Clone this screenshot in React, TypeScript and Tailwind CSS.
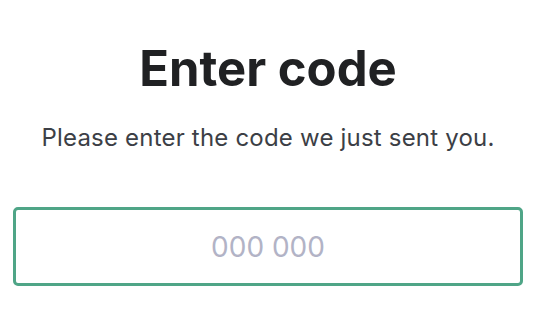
export default function App() {
  return (
    <div className="min-h-screen bg-white font-['Inter',sans-serif]">
      <div className="w-[510px] ml-[13px] pt-[40px] flex flex-col items-center">
        <h1 className="text-[49px] leading-[58px] font-bold text-[#202123]">
          Enter code
        </h1>
        <p className="mt-[24px] text-[24px] leading-[32px] tracking-[0.2px] text-[#3c3f46]">
          Please enter the code we just sent you.
        </p>
        <input
          type="text"
          placeholder="000 000"
          className="mt-[53px] w-full h-[79px] rounded-[5px] border-[3px] border-[#4fa587] bg-white text-center text-[28px] text-[#202123] placeholder:text-[#b2b3c6] outline-none"
        />
      </div>
    </div>
  );
}
